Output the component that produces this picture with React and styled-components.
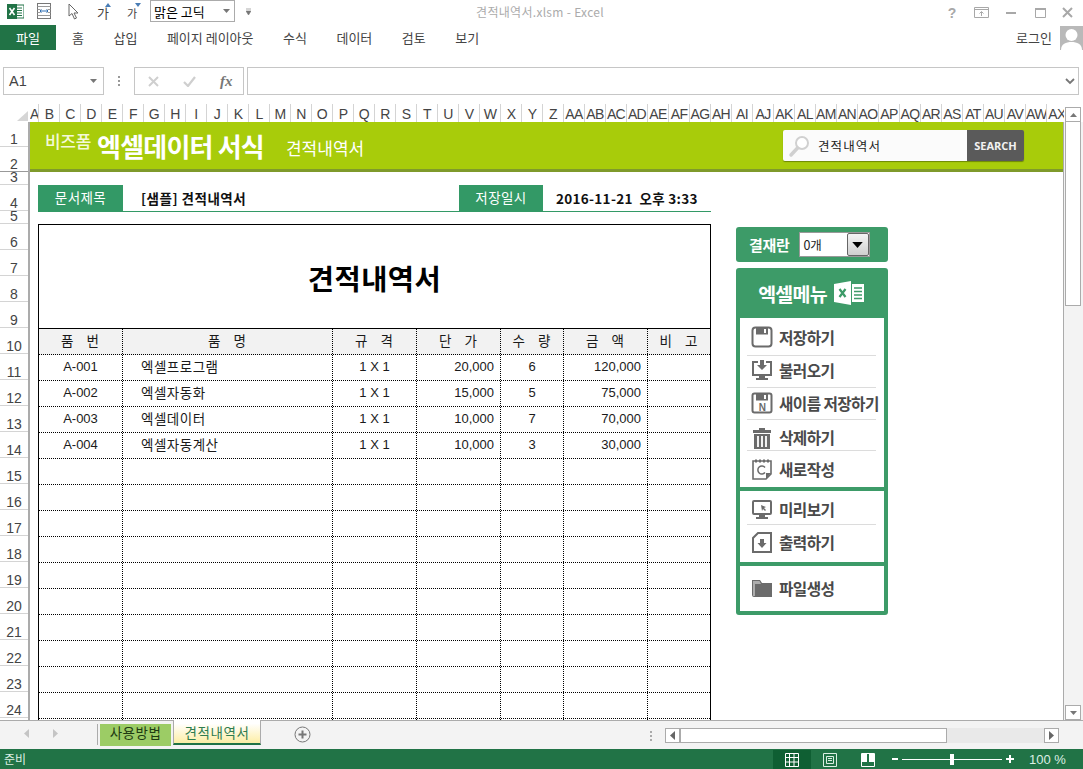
import styled, { createGlobalStyle } from 'styled-components';

const GlobalStyle = createGlobalStyle`
  html, body {
    margin: 0;
    padding: 0;
    overflow: hidden;
    background: #fff;
  }
  * { box-sizing: border-box; }
`;

const FONT = `"Noto Sans CJK KR", "Liberation Sans", sans-serif`;
const GREEN = '#217346';
const FORM_GREEN = '#3d9b68';

const Window = styled.div`
  width: 1083px;
  height: 769px;
  display: flex;
  flex-direction: column;
  font-family: ${FONT};
  color: #444;
  overflow: hidden;
  background: #fff;
`;

/* title bar */
const TitleBar = styled.div`
  height: 25px;
  display: flex;
  align-items: flex-start;
  position: relative;
`;
const Qat = styled.div`
  display: flex;
  align-items: center;
  height: 22px;
  padding-left: 7px;
`;
const QatIcon = styled.svg`
  display: block;
  flex: none;
  margin-right: ${(p) => p.$mr}px;
`;
const FontBox = styled.div`
  width: 85px;
  height: 22px;
  border: 1px solid #ababab;
  display: flex;
  align-items: center;
  justify-content: space-between;
  padding: 0 4px 0 3px;
  font-size: 13px;
  color: #000;
  margin-right: 11px;
`;
const DocTitle = styled.div`
  position: absolute;
  left: 0;
  right: 0;
  top: 3px;
  text-align: center;
  font-size: 12px;
  line-height: 17px;
  color: #ababab;
  padding-right: 3px;
  letter-spacing: 0.3px;
`;
const WinControls = styled.div`
  margin-left: auto;
  margin-right: 2px;
  display: flex;
  align-items: center;
  height: 25px;
  position: relative;
`;
const WinBtn = styled.div`
  width: ${(p) => p.$w}px;
  display: flex;
  justify-content: center;
  color: #a8a8a8;
  font-size: 14px;
  font-weight: 700;
  font-family: "Liberation Sans", sans-serif;
`;

/* ribbon tabs */
const TabRow = styled.div`
  height: 25px;
  display: flex;
  align-items: center;
`;
const FileTab = styled.div`
  width: 56px;
  height: 25px;
  background: ${GREEN};
  color: #fff;
  font-size: 13px;
  display: flex;
  align-items: center;
  justify-content: center;
  margin-right: 16px;
`;
const RibbonTab = styled.div`
  font-size: 13px;
  color: #444;
  margin-right: 29.5px;
  white-space: nowrap;
`;
const Login = styled.div`
  margin-left: auto;
  display: flex;
  align-items: center;
  gap: 8px;
  font-size: 13px;
  color: #444;
`;

/* formula bar */
const FormulaRow = styled.div`
  height: 28px;
  margin-top: 17px;
  padding: 0 4px 0 3px;
  display: flex;
  align-items: stretch;
`;
const NameBox = styled.div`
  width: 101px;
  border: 1px solid #c6c6c6;
  display: flex;
  align-items: center;
  justify-content: space-between;
  padding: 0 6px 0 5px;
  font-family: "Liberation Sans", sans-serif;
  font-size: 14.5px;
  color: #444;
`;
const Dots = styled.div`
  width: 30px;
  display: flex;
  justify-content: center;
  align-items: center;
`;
const FxGroup = styled.div`
  width: 110px;
  border: 1px solid #c6c6c6;
  display: flex;
  align-items: center;
  padding-left: 13px;
  gap: 24px;
  margin-right: 3px;
`;
const FxLabel = styled.span`
  font-family: "Liberation Serif", serif;
  font-style: italic;
  font-weight: 700;
  font-size: 15px;
  color: #777;
`;
const FormulaInput = styled.div`
  flex: 1;
  border: 1px solid #c6c6c6;
  display: flex;
  align-items: center;
  justify-content: flex-end;
  padding-right: 3px;
`;

/* column headers */
const ColHeaderRow = styled.div`
  height: 18px;
  margin-top: 9px;
  display: flex;
`;
const Corner = styled.div`
  width: 30px;
  display: flex;
  align-items: flex-end;
  justify-content: flex-end;
  padding: 0 2px 1px 0;
`;
const ColHeaders = styled.div`
  width: 1034px;
  display: flex;
  overflow: hidden;
`;
const ColHead = styled.div`
  flex: none;
  width: ${(p) => p.$w}px;
  border-right: 1px solid #d4d4d4;
  font-family: "Liberation Sans", sans-serif;
  font-size: 14px;
  line-height: 20px;
  letter-spacing: -0.6px;
  color: #444;
  text-align: center;
  overflow: hidden;
  white-space: nowrap;
`;
const ScrollBtnV = styled.div`
  width: 16px;
  height: 15px;
  border: 1px solid #ababab;
  background: #fff;
  margin-left: 1px;
  margin-top: 3px;
  display: flex;
  align-items: center;
  justify-content: center;
`;

/* sheet area */
const SheetArea = styled.div`
  height: 599px;
  display: flex;
  border-bottom: 1px solid #ababab;
`;
const RowHeaders = styled.div`
  width: 30px;
  flex: none;
  border-right: 2px solid #ababab;
  overflow: hidden;
`;
const RowHead = styled.div`
  height: ${(p) => p.$h}px;
  border-bottom: 1px solid ${(p) => (p.$dark ? '#999' : '#d4d4d4')};
  font-family: "Liberation Sans", sans-serif;
  font-size: 14px;
  line-height: 14px;
  color: #444;
  display: flex;
  align-items: flex-end;
  justify-content: center;
  overflow: hidden;
`;
const Sheet = styled.div`
  width: 1034px;
  flex: none;
  border-right: 1px solid #ababab;
  overflow: hidden;
`;
const Banner = styled.div`
  height: 50px;
  background: #a8cc0a;
  border-bottom: 3px solid #7f9a2b;
  display: flex;
  align-items: center;
  padding: 0 39px 0 15px;
`;
const BrandSmall = styled.span`
  font-size: 17px;
  font-weight: 500;
  color: #f4f9d8;
  margin: -11px 6px 0 0;
  letter-spacing: -0.3px;
  white-space: nowrap;
`;
const BrandBig = styled.span`
  font-size: 26px;
  font-weight: 700;
  letter-spacing: -0.8px;
  color: #fff;
  white-space: nowrap;
  margin-right: 22px;
`;
const BrandDoc = styled.span`
  font-size: 17px;
  color: #fff;
  white-space: nowrap;
  margin-top: 3px;
`;
const SearchBox = styled.div`
  margin-left: auto;
  width: 241px;
  height: 31px;
  display: flex;
  border-radius: 2px;
  overflow: hidden;
  box-shadow: 0 1px 1px rgba(70, 90, 0, 0.6);
`;
const SearchField = styled.div`
  flex: 1;
  background: #fbfbfb;
  display: flex;
  align-items: center;
  padding-left: 5px;
  gap: 6px;
  font-size: 12.5px;
  letter-spacing: 1.1px;
  color: #222;
`;
const SearchBtn = styled.div`
  width: 57px;
  background: #5a5a5a;
  color: #f2f2f2;
  font-family: "Open Sans", sans-serif;
  font-weight: 700;
  font-size: 11px;
  display: flex;
  align-items: center;
  justify-content: center;
`;
const Lower = styled.div`
  display: flex;
  align-items: flex-start;
  padding: 13px 0 0 8px;
  gap: 25px;
`;
const LeftCol = styled.div`
  width: 673px;
  flex: none;
`;
const DocRow = styled.div`
  height: 27px;
  display: grid;
  grid-template-columns: 85px 336px 84px 1fr;
  border-bottom: 1px solid #339966;
  margin-bottom: 12px;
`;
const DocLabel = styled.div`
  background: #339966;
  color: #fff;
  font-size: 13.5px;
  letter-spacing: 0.4px;
  padding-bottom: 2px;
  display: flex;
  align-items: center;
  justify-content: center;
`;
const DocValue = styled.div`
  font-size: 13.5px;
  font-weight: 700;
  color: #111;
  display: flex;
  align-items: center;
  padding: 0 0 1px ${(p) => p.$pad}px;
  white-space: pre;
  letter-spacing: ${(p) => p.$ls}px;
`;
const Form = styled.div`
  border: 1px solid #000;
  border-bottom: 0;
  width: 673px;
`;
const FormTitle = styled.div`
  height: 104px;
  border-bottom: 1px solid #000;
  display: flex;
  align-items: center;
  justify-content: center;
  font-size: 28.5px;
  font-weight: 700;
  color: #000;
  letter-spacing: 0.5px;
  padding-top: 1px;
`;
const GridRow = styled.div`
  display: grid;
  grid-template-columns: 84px 210px 84px 84px 63px 84px 1fr;
  height: 26px;
  border-bottom: 1px dotted #000;
  background: ${(p) => (p.$head ? '#f2f2f2' : '#fff')};
`;
const Cell = styled.div`
  font-size: 13.5px;
  color: #1a1a1a;
  display: flex;
  align-items: center;
  justify-content: ${(p) => p.$align || 'center'};
  padding: ${(p) => (p.$align === 'flex-end' ? '0 6px 2px 0' : p.$align === 'flex-start' ? '0 0 4px 18px' : '0 0 4px')};
  white-space: pre;
  letter-spacing: 0.5px;
  &:not(:last-child) {
    border-right: 1px dotted #000;
  }
`;
const HeadCell = styled(Cell)`
  letter-spacing: 1px;
`;
const NumCell = styled(Cell)`
  font-family: "Liberation Sans", sans-serif;
  font-size: 13px;
  letter-spacing: 0;
  padding-bottom: 2px;
`;

/* sidebar */
const Sidebar = styled.div`
  width: 152px;
  flex: none;
  margin-top: 42px;
  display: flex;
  flex-direction: column;
  gap: 6px;
`;
const ApprovalBox = styled.div`
  height: 35px;
  background: ${FORM_GREEN};
  border-radius: 3px;
  display: flex;
  align-items: center;
  padding-left: 13px;
  gap: 9px;
  color: #fff;
  font-size: 15px;
  font-weight: 700;
  letter-spacing: -0.3px;
`;
const ApprovalSelect = styled.div`
  width: 71px;
  height: 25px;
  background: #fff;
  border: 1px solid #999;
  display: flex;
  align-items: center;
  justify-content: space-between;
  padding-left: 4px;
  font-size: 12.5px;
  font-weight: 400;
  color: #222;
`;
const SelectBtn = styled.div`
  width: 22px;
  height: 23px;
  background: linear-gradient(#f4f4f4, #cfcfcf);
  border: 1px solid #666;
  border-radius: 2px;
  display: flex;
  align-items: center;
  justify-content: center;
`;
const Menu = styled.div`
  background: ${FORM_GREEN};
  border-radius: 3px;
  padding: 0 4px 4px;
  display: flex;
  flex-direction: column;
  gap: 4px;
`;
const MenuHead = styled.div`
  height: 50px;
  margin-bottom: -4px;
  display: flex;
  align-items: center;
  justify-content: center;
  gap: 7px;
  color: #fff;
  font-size: 19.5px;
  font-weight: 700;
  letter-spacing: -0.8px;
  padding-right: 2px;
`;
const MenuGroup = styled.div`
  background: #fff;
  height: ${(p) => p.$h}px;
  padding: ${(p) => p.$top}px 8px 0 7px;
`;
const MenuItem = styled.div`
  height: ${(p) => p.$h}px;
  display: flex;
  align-items: center;
  gap: 6px;
  padding: ${(p) => p.$pt || 0}px 0 ${(p) => p.$pb || 0}px 4px;
  border-bottom: ${(p) => (p.$line ? '1px solid #dcdcdc' : '0')};
  font-size: 15.7px;
  font-weight: 700;
  letter-spacing: -0.6px;
  color: #4a4a4a;
  white-space: nowrap;
`;

/* vertical scrollbar */
const VScroll = styled.div`
  flex: 1;
  background: #f3f3f3;
  padding-left: 1px;
  display: flex;
  flex-direction: column;
  justify-content: space-between;
`;
const VThumb = styled.div`
  width: 16px;
  height: 184px;
  background: #fff;
  border: 1px solid #ababab;
  border-top: 0;
`;
const ScrollBtnDown = styled.div`
  width: 16px;
  height: 15px;
  background: #fff;
  border: 1px solid #ababab;
  display: flex;
  align-items: center;
  justify-content: center;
`;

/* sheet tabs */
const TabBar = styled.div`
  height: 28px;
  background: #f3f3f3;
  display: flex;
  align-items: flex-start;
`;
const NavArrows = styled.div`
  width: 97px;
  height: 25px;
  display: flex;
  align-items: center;
  padding-left: 24px;
  gap: 24px;
  flex: none;
`;
const TabDivider = styled.div`
  width: 1px;
  height: 21px;
  margin-top: 3px;
  background: #ababab;
  margin-right: 2px;
`;
const UsageTab = styled.div`
  width: 71px;
  height: 22px;
  margin-top: 3px;
  padding-bottom: 6px;
  background: #9ccc65;
  color: #1e3a12;
  font-size: 13.5px;
  letter-spacing: 0.5px;
  display: flex;
  align-items: center;
  justify-content: center;
`;
const ActiveTab = styled.div`
  width: 88px;
  height: 25px;
  margin: -1px 0 0 2px;
  padding-top: 1px;
  background: linear-gradient(#fff 15%, #fdeea4);
  border-left: 1px solid #ababab;
  border-right: 1px solid #ababab;
  border-bottom: 2px solid ${GREEN};
  color: #2f7d4f;
  font-size: 13.5px;
  letter-spacing: 0.6px;
  display: flex;
  align-items: center;
  justify-content: center;
`;
const AddSheet = styled.div`
  margin: 5px 0 0 33px;
`;
const HScrollGroup = styled.div`
  margin-left: auto;
  display: flex;
  align-items: center;
  padding: 7px 24px 0 0;
`;
const HDots = styled.div`
  margin-right: 13px;
  display: flex;
`;
const HBtn = styled.div`
  width: 15px;
  height: 15px;
  background: #fff;
  border: 1px solid #ababab;
  display: flex;
  align-items: center;
  justify-content: center;
`;
const HTrack = styled.div`
  width: 364px;
  height: 15px;
  background: #e9e9e9;
`;
const HThumb = styled.div`
  width: 267px;
  height: 15px;
  background: #fff;
  border: 1px solid #ababab;
`;

/* status bar */
const StatusBar = styled.div`
  height: 20px;
  background: ${GREEN};
  display: flex;
  align-items: stretch;
  color: #dcefe3;
`;
const StatusText = styled.div`
  font-size: 12px;
  line-height: 20px;
  padding-left: 4px;
`;
const ViewGroup = styled.div`
  margin-left: auto;
  display: flex;
  align-items: stretch;
`;
const ViewBtn = styled.div`
  width: 38px;
  margin-top: 1px;
  background: ${(p) => (p.$active ? '#0f5f33' : 'transparent')};
  display: flex;
  align-items: center;
  justify-content: center;
`;
const ZoomGroup = styled.div`
  display: flex;
  align-items: center;
  margin-left: 5px;
  width: 191px;
`;
const ZoomSign = styled.span`
  width: ${(p) => (p.$plus ? 8 : 6)}px;
  height: 2px;
  background: #fff;
  position: relative;
  flex: none;
  &::after {
    content: '';
    display: ${(p) => (p.$plus ? 'block' : 'none')};
    position: absolute;
    left: 3px;
    top: -3px;
    width: 2px;
    height: 8px;
    background: #fff;
  }
`;
const ZoomTrack = styled.div`
  width: 100px;
  height: 1px;
  margin: 0 4px;
  background: #fff;
  position: relative;
  flex: none;
`;
const ZoomThumb = styled.div`
  position: absolute;
  left: 48px;
  top: -5px;
  width: 4px;
  height: 11px;
  background: #fff;
`;
const ZoomPct = styled.div`
  margin-left: 15px;
  font-family: "Liberation Sans", sans-serif;
  font-size: 13px;
  white-space: nowrap;
`;

/* icons */
const ExcelSmall = () => (
  <QatIcon $mr={13} width="17" height="15" viewBox="0 0 17 15">
    <rect x="6" y="1" width="11" height="13" fill="#fff" stroke="#217346" />
    <path d="M10 4h5M10 6.500h5M10 9h5M10 11.500h5" stroke="#217346" />
    <rect x="0" y="0" width="10" height="15" fill="#217346" />
    <path d="M2.500 4l5 7M7.500 4l-5 7" stroke="#fff" strokeWidth="1.600" />
  </QatIcon>
);
const TableIcon = () => (
  <QatIcon $mr={17} width="14" height="16" viewBox="0 0 14 16">
    <rect x=".5" y=".5" width="13" height="15" fill="#fff" stroke="#777" />
    <path d="M.5 3.500h13M.5 12.500h13M.5 6.500h3M10.500 6.500h3M.5 9.500h3M10.500 9.500h3" stroke="#999" />
    <path d="M3 8h8M3 8l1.500-1.500M3 8l1.500 1.500M11 8L9.500 6.500M11 8L9.500 9.500" stroke="#2f6fb3" fill="none" />
  </QatIcon>
);
const CursorIcon = () => (
  <QatIcon $mr={18} width="11" height="17" viewBox="0 0 11 17">
    <path d="M1 1v12l3-2.500L6.500 16l2-1-2.500-5H10z" fill="#fff" stroke="#666" />
  </QatIcon>
);
const FontGrow = ({ up }) => (
  <QatIcon $mr={up ? 16 : 9} width="14" height="18" viewBox="0 0 14 18">
    <text x="0" y="16" fontSize={up ? 13 : 11} fontFamily={FONT} fill="#444">가</text>
    {up ? <path d="M11 1l3 4H8z" fill="#4a7db5" /> : <path d="M8 1h6l-3 4z" fill="#4a7db5" />}
  </QatIcon>
);
const Caret = ({ color = '#777', w = 7, h = 4 }) => (
  <svg width={w} height={h} viewBox="0 0 7 4" style={{ display: 'block' }}>
    <path d="M0 0h7L3.500 4z" fill={color} />
  </svg>
);
const CaretUp = ({ color = '#777' }) => (
  <svg width="7" height="4" viewBox="0 0 7 4" style={{ display: 'block' }}>
    <path d="M0 4h7L3.500 0z" fill={color} />
  </svg>
);
const Arrow = ({ right, color = '#777' }) => (
  <svg width="5" height="9" viewBox="0 0 5 9" style={{ display: 'block' }}>
    <path d={right ? 'M0 0l5 4.500L0 9z' : 'M5 0L0 4.500 5 9z'} fill={color} />
  </svg>
);
const Avatar = () => (
  <svg width="23" height="24" viewBox="0 0 23 24" style={{ display: 'block' }}>
    <rect width="23" height="24" fill="#b9b9b9" />
    <circle cx="11.500" cy="9" r="6" fill="#fff" />
    <path d="M1 24c0-6 5-8 10.500-8S22 18 22 24z" fill="#fff" />
  </svg>
);

const G = '#6b6b6b';
const IconBox = styled.svg`
  display: block;
  flex: none;
  width: 22px;
  height: 22px;
`;
const FloppyIcon = () => (
  <IconBox viewBox="0 0 22 22">
    <rect x="1.500" y="1.500" width="19" height="19" rx="3" fill="#fff" stroke={G} strokeWidth="2" />
    <rect x="5" y="1.500" width="12" height="7" fill={G} />
    <rect x="13" y="3" width="2" height="4" fill="#fff" />
  </IconBox>
);
const LoadIcon = () => (
  <IconBox viewBox="0 0 22 22">
    <path d="M7 3H2v13h18V3h-5" fill="none" stroke={G} strokeWidth="2" />
    <path d="M9 1h4v5h3l-5 5-5-5h3z" fill={G} />
    <path d="M8 17h6v2h3v2H5v-2h3z" fill={G} />
  </IconBox>
);
const SaveAsIcon = () => (
  <IconBox viewBox="0 0 22 22">
    <rect x="1.500" y="1.500" width="19" height="19" rx="2" fill="#fff" stroke={G} strokeWidth="2" />
    <rect x="5" y="1.500" width="12" height="7" fill={G} />
    <rect x="13" y="3" width="2" height="4" fill="#fff" />
    <text x="11" y="19" textAnchor="middle" fontSize="10" fontWeight="700" fontFamily="Liberation Sans" fill={G}>N</text>
  </IconBox>
);
const TrashIcon = () => (
  <IconBox viewBox="0 0 22 22">
    <path d="M8 1h6v2h6v3H2V3h6z" fill={G} />
    <path d="M3 7h16v15H3z" fill={G} />
    <path d="M7 9v11M11 9v11M15 9v11" stroke="#fff" strokeWidth="1.800" />
  </IconBox>
);
const NoteIcon = () => (
  <IconBox viewBox="0 0 22 22">
    <path d="M2 3h18v13l-5 5H2z" fill="#fff" stroke={G} strokeWidth="1.600" />
    <path d="M4 3h2M8 3h2M12 3h2M16 3h2" stroke={G} strokeWidth="3" />
    <path d="M20 15h-5v6z" fill={G} />
    <path d="M14 9.500a4 4 0 1 0 0 5" fill="none" stroke={G} strokeWidth="1.500" />
  </IconBox>
);
const PreviewIcon = () => (
  <IconBox viewBox="0 0 22 22">
    <rect x="2" y="3" width="18" height="13" rx="1" fill="#fff" stroke={G} strokeWidth="2" />
    <path d="M10 7l5 2-2 1 2 2-1 1-2-2-1 2z" fill={G} />
    <path d="M8 17h6v2h3v2H5v-2h3z" fill={G} />
  </IconBox>
);
const PrintIcon = () => (
  <IconBox viewBox="0 0 22 22">
    <path d="M7 2h13v19H2V7z" fill="#fff" stroke={G} strokeWidth="2" />
    <path d="M9 8h4v4h2.500L11 17l-4.500-5H9z" fill={G} />
  </IconBox>
);
const FolderIcon = () => (
  <IconBox viewBox="0 0 22 22">
    <path d="M1 3h8l2 3h10v14H3a2 2 0 0 1-2-2z" fill={G} />
    <path d="M2 4h6.500l1.500 3H4v12H2z" fill="#fff" opacity=".45" />
  </IconBox>
);
const ExcelWhite = () => (
  <svg width="30" height="24" viewBox="0 0 30 24" style={{ display: 'block' }}>
    <path d="M0 3l17-3v24L0 21z" fill="#fff" />
    <rect x="18" y="3" width="12" height="18" fill="#fff" />
    <path d="M20 7h8M20 10.500h8M20 14h8M20 17.500h8" stroke={FORM_GREEN} strokeWidth="1.500" />
    <path d="M5.500 8l6 8M11.500 8l-6 8" stroke={FORM_GREEN} strokeWidth="2.200" />
  </svg>
);
const Magnifier = () => (
  <svg width="24" height="24" viewBox="0 0 24 24" style={{ display: 'block' }}>
    <circle cx="14" cy="9" r="6" fill="#fff" stroke="#d0d0d0" strokeWidth="2" />
    <path d="M9.500 14L3 21" stroke="#d0d0d0" strokeWidth="3.500" strokeLinecap="round" />
  </svg>
);
const GridView = () => (
  <svg width="14" height="14" viewBox="0 0 14 14">
    <path d="M.5.500h13v13H.5zM.5 4.500h13M.5 9h13M4.500.500v13M9 .500v13" fill="none" stroke="#fff" />
  </svg>
);
const PageView = () => (
  <svg width="14" height="14" viewBox="0 0 14 14">
    <path d="M.5.500h13v13H.5z" fill="none" stroke="#dcefe3" />
    <path d="M3.500 3.500h7v7h-7zM5 5.500h4M5 7.500h4" fill="none" stroke="#dcefe3" />
  </svg>
);
const BreakView = () => (
  <svg width="14" height="14" viewBox="0 0 14 14">
    <path d="M.5.500h13v13H.5z" fill="none" stroke="#fff" />
    <path d="M1 1h5v8H1zM8 1h5v8H8z" fill="#fff" />
  </svg>
);

const colName = (i) => (i < 26 ? String.fromCharCode(65 + i) : 'A' + String.fromCharCode(65 + i - 26));
const columns = Array.from({ length: 50 }, (_, i) => ({ name: colName(i), width: i === 0 ? 9 : 21 }));
const rowHeights = [25, 25, 13, 26, 13, ...Array(20).fill(26)];

const items = [
  ['A-001', '엑셀프로그램', '20,000', '6', '120,000'],
  ['A-002', '엑셀자동화', '15,000', '5', '75,000'],
  ['A-003', '엑셀데이터', '10,000', '7', '70,000'],
  ['A-004', '엑셀자동계산', '10,000', '3', '30,000'],
  ...Array(11).fill(null),
];

const ribbonTabs = ['홈', '삽입', '페이지 레이아웃', '수식', '데이터', '검토', '보기'];
const headers = ['품   번', '품   명', '규   격', '단   가', '수   량', '금   액', '비   고'];

export default function App() {
  return (
    <Window>
      <GlobalStyle />
      <TitleBar>
        <Qat>
          <ExcelSmall />
          <TableIcon />
          <CursorIcon />
          <FontGrow up />
          <FontGrow />
          <FontBox>
            맑은 고딕
            <Caret />
          </FontBox>
          <svg width="5" height="7" viewBox="0 0 5 7">
            <path d="M0 1h5M0 3h5L2.500 7z" fill="#777" stroke="#777" strokeWidth=".6" />
          </svg>
        </Qat>
        <DocTitle>견적내역서.xlsm - Excel</DocTitle>
        <WinControls>
          <WinBtn $w={28}>?</WinBtn>
          <WinBtn $w={30}>
            <svg width="15" height="11" viewBox="0 0 15 11">
              <path d="M.5.500h14v10H.5zM.5 2.500h14M7.500 9V5M5.500 6.500l2-2 2 2" fill="none" stroke="#a8a8a8" />
            </svg>
          </WinBtn>
          <WinBtn $w={30}>
            <svg width="10" height="3" viewBox="0 0 10 3"><rect y="1" width="10" height="2" fill="#a8a8a8" /></svg>
          </WinBtn>
          <WinBtn $w={28}>
            <svg width="11" height="10" viewBox="0 0 11 10"><path d="M.5 1h10v8.500H.5z" fill="none" stroke="#a8a8a8" strokeWidth="1" /><rect x="0" y="0" width="11" height="2" fill="#a8a8a8" /></svg>
          </WinBtn>
          <WinBtn $w={27}>
            <svg width="11" height="11" viewBox="0 0 11 11"><path d="M1 1l9 9M10 1l-9 9" stroke="#a8a8a8" strokeWidth="2" /></svg>
          </WinBtn>
        </WinControls>
      </TitleBar>

      <TabRow>
        <FileTab>파일</FileTab>
        {ribbonTabs.map((t) => (
          <RibbonTab key={t}>{t}</RibbonTab>
        ))}
        <Login>
          로그인
          <Avatar />
        </Login>
      </TabRow>

      <FormulaRow>
        <NameBox>
          A1
          <Caret />
        </NameBox>
        <Dots>
          <svg width="2" height="10" viewBox="0 0 2 10"><path d="M0 0h2v2H0zM0 4h2v2H0zM0 8h2v2H0z" fill="#999" /></svg>
        </Dots>
        <FxGroup>
          <svg width="11" height="11" viewBox="0 0 11 11"><path d="M1 1l9 9M10 1l-9 9" stroke="#cfcfcf" strokeWidth="2" /></svg>
          <svg width="13" height="11" viewBox="0 0 13 11"><path d="M1 6l4 4 7-9" fill="none" stroke="#cfcfcf" strokeWidth="2.200" /></svg>
          <FxLabel>fx</FxLabel>
        </FxGroup>
        <FormulaInput>
          <svg width="10" height="7" viewBox="0 0 10 7"><path d="M1 1l4 4 4-4" fill="none" stroke="#777" strokeWidth="1.800" /></svg>
        </FormulaInput>
      </FormulaRow>

      <ColHeaderRow>
        <Corner>
          <svg width="11" height="10" viewBox="0 0 11 10"><path d="M11 0v10H0z" fill="#d6d6d6" /></svg>
        </Corner>
        <ColHeaders>
          {columns.map((c) => (
            <ColHead key={c.name} $w={c.width}>{c.name}</ColHead>
          ))}
        </ColHeaders>
        <ScrollBtnV><CaretUp /></ScrollBtnV>
      </ColHeaderRow>

      <SheetArea>
        <RowHeaders>
          {rowHeights.map((h, i) => (
            <RowHead key={i} $h={h} $dark={i === 1}>{i + 1}</RowHead>
          ))}
        </RowHeaders>
        <Sheet>
          <Banner>
            <BrandSmall>비즈폼</BrandSmall>
            <BrandBig>엑셀데이터 서식</BrandBig>
            <BrandDoc>견적내역서</BrandDoc>
            <SearchBox>
              <SearchField>
                <Magnifier />
                견적내역서
              </SearchField>
              <SearchBtn>SEARCH</SearchBtn>
            </SearchBox>
          </Banner>
          <Lower>
            <LeftCol>
              <DocRow>
                <DocLabel>문서제목</DocLabel>
                <DocValue $pad={18} $ls={0.5}>[샘플] 견적내역서</DocValue>
                <DocLabel>저장일시</DocLabel>
                <DocValue $pad={13} $ls={0.3}>{'2016-11-21  오후 3:33'}</DocValue>
              </DocRow>
              <Form>
                <FormTitle>견적내역서</FormTitle>
                <GridRow $head>
                  {headers.map((h) => (
                    <HeadCell key={h}>{h}</HeadCell>
                  ))}
                </GridRow>
                {items.map((it, i) => (
                  <GridRow key={i}>
                    <NumCell>{it && it[0]}</NumCell>
                    <Cell $align="flex-start">{it && it[1]}</Cell>
                    <NumCell>{it && '1 X 1'}</NumCell>
                    <NumCell $align="flex-end">{it && it[2]}</NumCell>
                    <NumCell>{it && it[3]}</NumCell>
                    <NumCell $align="flex-end">{it && it[4]}</NumCell>
                    <Cell />
                  </GridRow>
                ))}
              </Form>
            </LeftCol>
            <Sidebar>
              <ApprovalBox>
                결재란
                <ApprovalSelect>
                  0개
                  <SelectBtn><Caret color="#000" w={11} h={6} /></SelectBtn>
                </ApprovalSelect>
              </ApprovalBox>
              <Menu>
                <MenuHead>
                  엑셀메뉴
                  <ExcelWhite />
                </MenuHead>
                <MenuGroup $h={169} $top={4}>
                  <MenuItem $h={34} $line $pb={3}><FloppyIcon />저장하기</MenuItem>
                  <MenuItem $h={32} $line $pb={3}><LoadIcon />불러오기</MenuItem>
                  <MenuItem $h={32} $line $pb={1}><SaveAsIcon />새이름 저장하기</MenuItem>
                  <MenuItem $h={31} $line $pt={5}><TrashIcon />삭제하기</MenuItem>
                  <MenuItem $h={36}><NoteIcon />새로작성</MenuItem>
                </MenuGroup>
                <MenuGroup $h={71} $top={3}>
                  <MenuItem $h={31} $line><PreviewIcon />미리보기</MenuItem>
                  <MenuItem $h={37} $pb={3}><PrintIcon />출력하기</MenuItem>
                </MenuGroup>
                <MenuGroup $h={45} $top={0}>
                  <MenuItem $h={45} $pb={1}><FolderIcon />파일생성</MenuItem>
                </MenuGroup>
              </Menu>
            </Sidebar>
          </Lower>
        </Sheet>
        <VScroll>
          <VThumb />
          <ScrollBtnDown><Caret /></ScrollBtnDown>
        </VScroll>
      </SheetArea>

      <TabBar>
        <NavArrows>
          <Arrow color="#c4c4c4" />
          <Arrow right color="#c4c4c4" />
        </NavArrows>
        <TabDivider />
        <UsageTab>사용방법</UsageTab>
        <ActiveTab>견적내역서</ActiveTab>
        <AddSheet>
          <svg width="17" height="17" viewBox="0 0 17 17" style={{ display: 'block' }}>
            <circle cx="8.500" cy="8.500" r="7.500" fill="none" stroke="#777" />
            <path d="M8.500 4.500v8M4.500 8.500h8" stroke="#777" strokeWidth="2" />
          </svg>
        </AddSheet>
        <HScrollGroup>
          <HDots>
            <svg width="2" height="10" viewBox="0 0 2 10"><path d="M0 0h2v2H0zM0 4h2v2H0zM0 8h2v2H0z" fill="#aaa" /></svg>
          </HDots>
          <HBtn><Arrow color="#666" /></HBtn>
          <HTrack><HThumb /></HTrack>
          <HBtn><Arrow right color="#666" /></HBtn>
        </HScrollGroup>
      </TabBar>

      <StatusBar>
        <StatusText>준비</StatusText>
        <ViewGroup>
          <ViewBtn $active><GridView /></ViewBtn>
          <ViewBtn><PageView /></ViewBtn>
          <ViewBtn><BreakView /></ViewBtn>
          <ZoomGroup>
            <ZoomSign />
            <ZoomTrack><ZoomThumb /></ZoomTrack>
            <ZoomSign $plus />
            <ZoomPct>100 %</ZoomPct>
          </ZoomGroup>
        </ViewGroup>
      </StatusBar>
    </Window>
  );
}
